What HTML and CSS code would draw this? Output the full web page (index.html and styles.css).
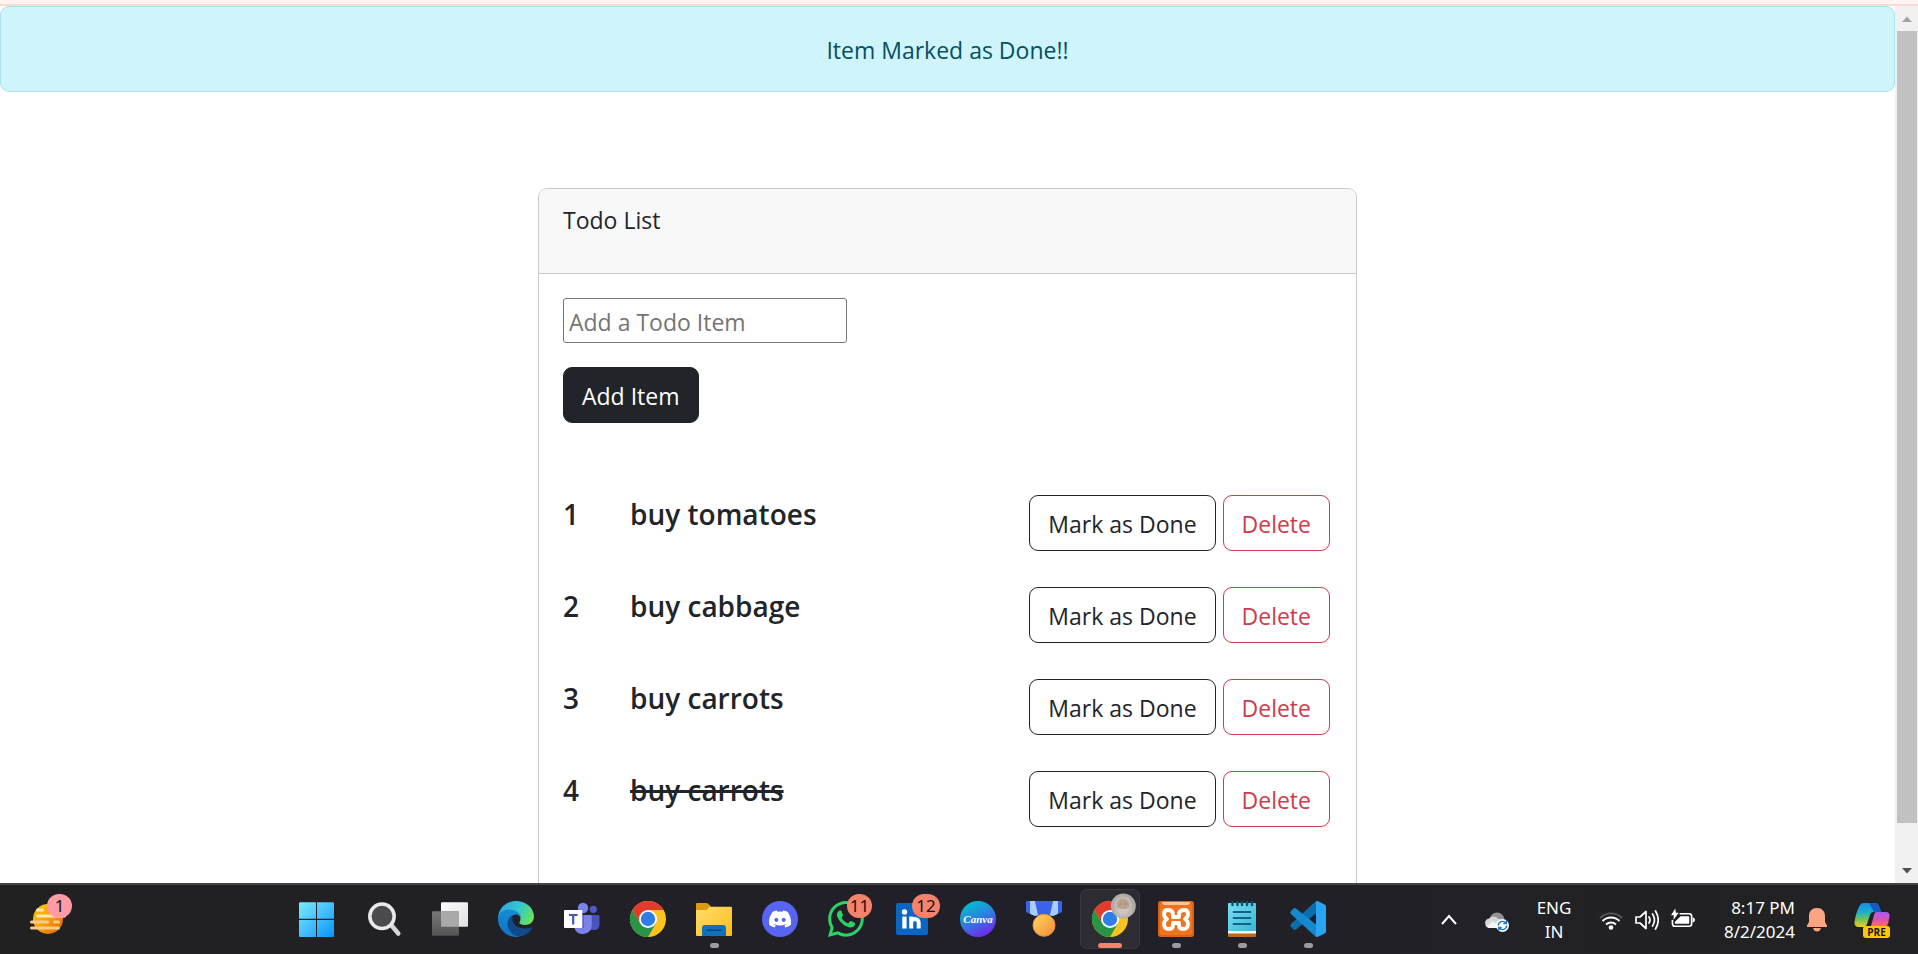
FILE: index.html
```html
<!DOCTYPE html>
<html lang="en">
<head>
<meta charset="utf-8">
<title>Todo List</title>
<link rel="stylesheet" href="styles.css">
</head>
<body>
<div class="window-edge"></div>
<div class="viewport">
  <main class="page">
    <div class="alert" role="alert">Item Marked as Done!!</div>
    <section class="card">
      <header class="card-header">Todo List</header>
      <div class="card-body">
        <form class="add-form">
          <input class="todo-input" type="text" placeholder="Add a Todo Item" aria-label="Add a Todo Item">
          <button class="btn btn-dark" type="button">Add Item</button>
        </form>
        <ol class="todos">
          <li class="todo"><h5 class="num">1</h5><h5 class="name">buy tomatoes</h5><button class="btn btn-outline-dark" type="button">Mark as Done</button><button class="btn btn-outline-danger" type="button">Delete</button></li>
          <li class="todo"><h5 class="num">2</h5><h5 class="name">buy cabbage</h5><button class="btn btn-outline-dark" type="button">Mark as Done</button><button class="btn btn-outline-danger" type="button">Delete</button></li>
          <li class="todo"><h5 class="num">3</h5><h5 class="name">buy carrots</h5><button class="btn btn-outline-dark" type="button">Mark as Done</button><button class="btn btn-outline-danger" type="button">Delete</button></li>
          <li class="todo"><h5 class="num">4</h5><h5 class="name"><del>buy carrots</del></h5><button class="btn btn-outline-dark" type="button">Mark as Done</button><button class="btn btn-outline-danger" type="button">Delete</button></li>
        </ol>
      </div>
    </section>
  </main>
  <div class="scrollbar">
    <svg class="scroll-arrow" viewBox="0 0 23 25"><path d="M7 16 12 10.500 17 16z" fill="#a3a3a3"/></svg>
    <div class="scroll-thumb"></div>
    <svg class="scroll-arrow" viewBox="0 0 23 25"><path d="M7 10 12 15.500 17 10z" fill="#505050"/></svg>
  </div>
</div>

<footer class="taskbar">
  <div class="widgets">
    <button class="slot" type="button" aria-label="Widgets">
      <svg viewBox="0 2 66 69">
        <defs><linearGradient id="sun" x1="0" y1="0" x2="1" y2="1"><stop offset="0" stop-color="#ffc90e"/><stop offset=".55" stop-color="#f59a0b"/><stop offset="1" stop-color="#dc5c00"/></linearGradient></defs>
        <circle cx="33" cy="36" r="15" fill="url(#sun)"/>
        <g stroke="#ffe9b0" stroke-width="3" stroke-linecap="round"><path d="M22.500 27h5M22.500 33h27"/><path d="M16.500 39h16M39.500 39h4M16.500 45h27" stroke="#f6cb8b"/></g>
      </svg>
      <span class="badge badge-pink">1</span>
    </button>
  </div>
  <nav class="apps">
    <button class="slot" type="button" aria-label="Start">
      <svg viewBox="0 2 66 69">
        <defs><linearGradient id="win" gradientUnits="userSpaceOnUse" x1="14" y1="19" x2="49" y2="54"><stop offset="0" stop-color="#78eaff"/><stop offset=".5" stop-color="#45bffc"/><stop offset="1" stop-color="#0796f8"/></linearGradient></defs>
        <path fill="url(#win)" d="M15 19.300h16v16.500H14V20.300q0-1 1-1zM32 19.300h16q1 0 1 1v15.500H32zM14 37h17v17H15q-1 0-1-1zM32 37h17v16q0 1-1 1H32z"/>
      </svg>
    </button>
    <button class="slot" type="button" aria-label="Search">
      <svg viewBox="0 2 66 69"><path d="m41 43 6.300 7.500" stroke="#d5d5d8" stroke-width="4.500" stroke-linecap="round"/><circle cx="31" cy="33.300" r="12.200" fill="#4b4b4e" stroke="#e9e9ec" stroke-width="3.500"/></svg>
    </button>
    <button class="slot" type="button" aria-label="Task view">
      <svg viewBox="0 2 66 69">
        <defs><linearGradient id="tv" x1="0" y1="0" x2="1" y2="1"><stop offset="0" stop-color="#fff"/><stop offset="1" stop-color="#dedede"/></linearGradient><linearGradient id="tg" x1="0" y1="0" x2="0" y2="1"><stop offset="0" stop-color="#777"/><stop offset="1" stop-color="#555"/></linearGradient></defs>
        <rect x="24" y="19.300" width="27" height="24.500" rx="1" fill="url(#tv)"/><rect x="15" y="28.300" width="27" height="24.500" rx="1" fill="url(#tg)"/><path d="M24 28.300h18v15.500H25q-1 0-1-1z" fill="#a9a9a9"/>
      </svg>
    </button>
    <button class="slot" type="button" aria-label="Edge">
      <svg viewBox="0 2 66 69">
        <defs>
          <linearGradient id="e1" x1="0" y1=".3" x2="1" y2=".7"><stop offset="0" stop-color="#2aa7e6"/><stop offset=".5" stop-color="#34c6cf"/><stop offset="1" stop-color="#6be552"/></linearGradient>
          <linearGradient id="e2" x1="0" y1="0" x2="0" y2="1"><stop offset="0" stop-color="#168bd2"/><stop offset="1" stop-color="#1173c4"/></linearGradient>
        </defs>
        <path d="M15 36C15 25 23 18 33 18c10 0 18 7 18 15.500 0 5-4 8.500-9 8.500-4 0-6-1.500-5.500-3 2-3 1-7-3-9C27 27 18 29 15 36z" fill="url(#e1)"/>
        <path d="M15 36c0-6 5-9.500 11-9.500 7 0 12 4 12 9-1-2.500-3-4-5-4-4 0-7 4-7 9 0 6 5 11 11 13a18 18 0 0 1-22-17.500z" fill="url(#e2)"/>
        <path d="M29.500 32.500C26 34 24 38 24.500 42c.7 6 6 11.500 12.500 11.500 5.500-1 10-4 12-8.500.3-.8-.5-1.200-1.200-.8-2 1-4 1.300-6 1.300-7 0-12-4-12.300-9 0-2 0-3 0-4z" fill="#114a8b"/>
      </svg>
    </button>
    <button class="slot" type="button" aria-label="Teams">
      <svg viewBox="0 2 66 69">
        <circle cx="44.300" cy="26.300" r="3.600" fill="#5059c9"/><path d="M41 32h8q1.500 0 1.500 1.500V42q0 5-5.500 5h-4z" fill="#4b53bc"/>
        <circle cx="34" cy="25" r="5.200" fill="#7b83eb"/><path d="M26 32h15.500q1.200 0 1.200 1.200V43a9 9 0 0 1-17 3z" fill="#7b83eb"/>
        <path d="M26 32h9v13h-9z" fill="#5a62c4"/>
        <rect x="15" y="27" width="18.300" height="18" rx="1" fill="#fff"/><path d="M20 32h8.500M24.200 32v9.500" stroke="#4b53bc" stroke-width="2.200" fill="none"/>
      </svg>
    </button>
    <button class="slot" type="button" aria-label="Chrome">
      <svg viewBox="0 2 66 69">
        <g id="chrome"><circle cx="33" cy="36" r="18" fill="#fcc31e"/><path d="M17.400 27A18 18 0 0 1 48.600 27H33l-7.800 13.500z" fill="#e33b2e"/><path d="M17.400 27A18 18 0 0 0 33 54l7.800-13.500H25.200z" fill="#279447"/><circle cx="33" cy="36" r="9" fill="#fff"/><circle cx="33" cy="36" r="7.200" fill="#2f7de9"/></g>
      </svg>
    </button>
    <button class="slot" type="button" aria-label="File Explorer">
      <svg viewBox="0 2 66 69">
        <defs><linearGradient id="fo" x1="0" y1="0" x2="1" y2="1"><stop offset="0" stop-color="#ffde6b"/><stop offset="1" stop-color="#fcbc1d"/></linearGradient></defs>
        <path d="M15 21q0-1 1-1h9.500q1 0 2 1l2.500 2.500V30H15z" fill="#dc9a0c"/><path d="M15 27h9q1.500 0 2.500-1l2-2.300h21.500q1 0 1 1V52q0 1-1 1H16q-1 0-1-1z" fill="url(#fo)"/>
        <path d="M21 53v-8q0-3 3-3h18q3 0 3 3v8z" fill="#1071ba"/><path d="M26.500 47.200h13" stroke="#08447a" stroke-width="1.600" stroke-linecap="round"/>
      </svg>
      <span class="running"></span>
    </button>
    <button class="slot" type="button" aria-label="Discord">
      <svg viewBox="0 2 66 69"><circle cx="33" cy="36" r="18" fill="#5865f2"/>
        <path transform="translate(22 25) scale(1.380)" fill="#fff" d="M13.545 2.907a13.200 13.200 0 0 0-3.257-1.011.05.05 0 0 0-.052.025c-.141.25-.297.577-.406.833a12.200 12.200 0 0 0-3.658 0 8 8 0 0 0-.412-.833.05.05 0 0 0-.052-.025c-1.125.194-2.220.534-3.257 1.011a.04.04 0 0 0-.021.018C.356 6.024-.213 9.047.066 12.032q.003.022.021.037a13.300 13.300 0 0 0 3.995 2.020.05.05 0 0 0 .056-.019q.463-.63.818-1.329a.05.05 0 0 0-.01-.059l-.018-.011a9 9 0 0 1-1.248-.595.05.05 0 0 1-.02-.066l.015-.019q.127-.095.248-.195a.05.05 0 0 1 .051-.007c2.619 1.196 5.454 1.196 8.041 0a.05.05 0 0 1 .053.007q.121.1.248.195a.05.05 0 0 1-.004.085 8 8 0 0 1-1.249.594.05.05 0 0 0-.03.03.05.05 0 0 0 .003.041c.24.465.515.909.817 1.329a.05.05 0 0 0 .056.019 13.200 13.200 0 0 0 4.001-2.020.05.05 0 0 0 .021-.037c.334-3.451-.559-6.449-2.366-9.106a.03.03 0 0 0-.02-.019m-8.198 7.307c-.789 0-1.438-.724-1.438-1.612s.637-1.613 1.438-1.613c.807 0 1.450.73 1.438 1.613 0 .888-.637 1.612-1.438 1.612m5.316 0c-.788 0-1.438-.724-1.438-1.612s.637-1.613 1.438-1.613c.807 0 1.451.73 1.438 1.613 0 .888-.631 1.612-1.438 1.612"/></svg>
    </button>
    <button class="slot" type="button" aria-label="WhatsApp">
      <svg viewBox="0 2 66 69"><path transform="translate(15 18) scale(2.250)" fill="#2bd366" d="M13.601 2.326A7.850 7.850 0 0 0 7.994 0C3.627 0 .068 3.558.064 7.926c0 1.399.366 2.760 1.057 3.965L0 16l4.204-1.102a7.900 7.900 0 0 0 3.790.965h.004c4.368 0 7.926-3.558 7.930-7.930A7.900 7.900 0 0 0 13.600 2.326zM7.994 14.521a6.600 6.600 0 0 1-3.356-.92l-.24-.144-2.494.654.666-2.433-.156-.251a6.560 6.560 0 0 1-1.007-3.505c0-3.626 2.957-6.584 6.591-6.584a6.560 6.560 0 0 1 4.660 1.931 6.560 6.560 0 0 1 1.928 4.660c-.004 3.639-2.961 6.592-6.592 6.592m3.615-4.934c-.197-.099-1.170-.578-1.353-.646-.182-.065-.315-.099-.445.099-.133.197-.513.646-.627.775-.114.133-.232.148-.43.05-.197-.1-.836-.308-1.592-.985-.59-.525-.985-1.175-1.103-1.372-.114-.198-.011-.304.088-.403.087-.088.197-.232.296-.346.1-.114.133-.198.198-.33.065-.134.034-.248-.015-.347-.05-.099-.445-1.076-.612-1.470-.16-.389-.323-.335-.445-.34-.114-.007-.247-.007-.38-.007a.73.73 0 0 0-.529.247c-.182.198-.691.677-.691 1.654s.71 1.916.81 2.049c.098.133 1.394 2.132 3.383 2.992.47.205.84.326 1.129.418.475.152.904.129 1.246.08.38-.058 1.171-.48 1.338-.943.164-.464.164-.86.114-.943-.049-.084-.182-.133-.38-.232"/></svg>
      <span class="badge">11</span>
    </button>
    <button class="slot" type="button" aria-label="LinkedIn">
      <svg viewBox="0 2 66 69"><rect x="17" y="20" width="32" height="32" rx="2" fill="#0a66c2"/><circle cx="25.500" cy="29" r="2.700" fill="#fff"/><path d="M23.300 33.500h4.300v12h-4.300z" fill="#fff"/><path d="M32.200 45.500v-12M32.200 40c0-5.500 7.500-5.500 7.500 0v5.500" fill="none" stroke="#fff" stroke-width="4"/></svg>
      <span class="badge badge-wide">12</span>
    </button>
    <button class="slot" type="button" aria-label="Canva">
      <svg viewBox="0 2 66 69">
        <defs><linearGradient id="cv" x1=".2" y1="0" x2=".7" y2="1"><stop offset="0" stop-color="#00c4cc"/><stop offset=".5" stop-color="#2c7fe0"/><stop offset="1" stop-color="#7a20f0"/></linearGradient></defs>
        <circle cx="33" cy="36" r="18" fill="url(#cv)"/><text class="canva-word" x="33" y="40" text-anchor="middle">Canva</text>
      </svg>
    </button>
    <button class="slot" type="button" aria-label="Rewards">
      <svg viewBox="0 2 66 69">
        <defs><linearGradient id="md" x1="0" y1="0" x2="1" y2="1"><stop offset="0" stop-color="#ffd75e"/><stop offset="1" stop-color="#f58a3c"/></linearGradient></defs>
        <path d="M16 18h34q1 0 1 1v9q0 1-1 1.500L42 33H24l-8-3.500q-1-.5-1-1.500v-9q0-1 1-1z" fill="#3a62ea"/>
        <path d="M19 18h5l3 14-3 1-5-2.300zM47 18h-5l-3 14 3 1 5-2.300z" fill="#a6cdfd"/>
        <circle cx="33" cy="42.300" r="11" fill="url(#md)" stroke="#ee9035"/>
      </svg>
    </button>
    <button class="slot active" type="button" aria-label="Chrome window">
      <svg viewBox="0 2 66 69">
        <rect x="3.500" y="6.500" width="59" height="59" rx="6" fill="#2d2c33" stroke="#39383f"/>
        <use href="#chrome"/>
        <circle cx="46.300" cy="23" r="12.500" fill="#aeaaa6"/><path d="M37 22q1-8.500 9-8.500t9.500 8.500l-1 8q-3 4.500-8.500 4.500t-8-4.500z" fill="#c0bab4"/><ellipse cx="46" cy="22" rx="6" ry="6.500" fill="#bd9f8d"/><path d="M40.500 25q2.500 1 5.500 1t5.500-1q0 7-5.500 7t-5.500-7z" fill="#cdc6c0"/><path d="M42 21h3M47 21h3" stroke="#a0887a"/>
      </svg>
      <span class="running running-active"></span>
    </button>
    <button class="slot" type="button" aria-label="XAMPP">
      <svg viewBox="0 2 66 69">
        <rect x="15" y="18" width="36" height="36" rx="3" fill="#ee7422"/><rect x="16" y="19" width="34" height="34" rx="3" fill="none" stroke="#d75e13" stroke-width="1.500"/><path d="M19 19h28q0 3-3 3H22q-3 0-3-3z" fill="#fbc49a"/>
        <path d="M25 27q-4 0-4 4 0 3 3 5-3 2-3 5 0 5 5 5 4 0 4-4v-2h6v2q0 4 4 4 5 0 5-5 0-3-3-5 3-2 3-5 0-4-4-4-5 0-5 5v2h-6v-2q0-5-5-5z" fill="none" stroke="#fff" stroke-width="3.800" stroke-linejoin="round"/>
      </svg>
      <span class="running"></span>
    </button>
    <button class="slot" type="button" aria-label="Notepad">
      <svg viewBox="0 2 66 69">
        <defs><linearGradient id="np" x1="0" y1="0" x2="1" y2="1"><stop offset="0" stop-color="#7adff0"/><stop offset="1" stop-color="#3bb5d6"/></linearGradient></defs>
        <path d="M19 47h28v6q0 1-1 1H20q-1 0-1-1z" fill="#bd6a17"/><path d="M19 46h28v4.500H19z" fill="#f5f5f5"/><rect x="19" y="20" width="28" height="28" rx="1" fill="url(#np)"/>
        <path d="M23.500 19v3M28.500 19v3M33 19v3M38 19v3M43 19v3" stroke="#0b5470" stroke-width="2.400" stroke-linecap="round"/><path d="M24.500 29h17M24.500 35h17M24.500 41h17" stroke="#0e6387" stroke-width="1.800" stroke-linecap="round"/>
      </svg>
      <span class="running"></span>
    </button>
    <button class="slot" type="button" aria-label="Visual Studio Code">
      <svg viewBox="0 2 66 69">
        <path d="M41 18 16 41q-1.500 1.500 0 3l2.500 2.500q1.200.8 2.500 0L41.500 30z" fill="#0b6dab"/><path d="M41 54 16 31q-1.500-1.500 0-3l2.500-2.500q1.200-.8 2.500 0L41.500 42z" fill="#1688ce"/><path d="M41 18.300 42.500 18 50 21.800q1 .5 1 1.700v25q0 1.200-1 1.700L42.500 54q-.8.200-1.500-.5z" fill="#2aa5f3"/>
      </svg>
      <span class="running"></span>
    </button>
  </nav>
  <div class="tray">
    <svg class="chevron" viewBox="0 0 16 24"><path d="m1 16 7-8 7 8" fill="none" stroke="#fff" stroke-width="2"/></svg>
    <svg class="tray-icon cloud" viewBox="0 0 24 24">
      <circle cx="12" cy="12" r="7.500" fill="#919191"/><path d="M5 20a4.800 4.800 0 0 1-1-9.500 6 6 0 0 1 9 0L20 14v6z" fill="#d6d6d6"/><path d="M2 18.500 8 13l8 7H5q-2 0-3-1.500z" fill="#f5f5f5"/>
      <circle cx="17.500" cy="17.500" r="6.500" fill="#fff"/><path d="M13.300 17.500a4.200 4.200 0 0 1 7.500-2.500M21.700 17.500a4.200 4.200 0 0 1-7.500 2.500M21.300 12.500V15.500h-3M13.700 22.500v-3h3" fill="none" stroke="#1879cf" stroke-width="1.400"/>
    </svg>
    <div class="lang">ENG<br>IN</div>
    <svg class="tray-icon wifi" viewBox="0 0 24 24"><g fill="none" stroke="#fff" stroke-width="1.900"><path d="M1 10a15.500 15.500 0 0 1 22 0" stroke="#55555a"/><path d="M3.500 13a12 12 0 0 1 17 0M7 16.500a7.200 7.200 0 0 1 10 0"/></g><circle cx="12" cy="19.500" r="2.300" fill="#fff"/></svg>
    <svg class="tray-icon speaker" viewBox="0 0 24 24"><g fill="none" stroke="#fff" stroke-width="1.700" stroke-linejoin="round" stroke-linecap="round"><path d="M1 9v6h4l6 5.500v-17L5 9z"/><path d="M14 9q2 3 0 6M17.500 6q4 6 0 12M20.500 3q5.500 9 0 18"/></g></svg>
    <svg class="tray-icon battery" viewBox="0 0 25 24"><path d="M9 5.500h10q2.500 0 2.500 2.500v8q0 2.500-2.500 2.500H4q-2.500 0-2.500-2.500v-4" fill="none" stroke="#fff" stroke-width="1.700"/><path d="M10 8h8q1 0 1 1v6q0 1-1 1H5q-1 0-1-1v-1z" fill="#fff"/><path d="M22.500 9.500q2.500 0 2.500 2.500t-2.500 2.500z" fill="#fff"/><path d="M4.500 0 0 7h3L2.500 12 8 4.500H5z" fill="#fff"/></svg>
    <div class="clock">8:17 PM<br>8/2/2024</div>
    <svg class="bell" viewBox="0 0 20 24"><path d="M10 0c5 0 8 3.500 8 8v6l2 3.500V19H0v-1.500L2 14V8c0-4.500 3-8 8-8zM6 20h8q-1 3.500-4 3.500T6 20z" fill="#fba482"/></svg>
    <svg class="copilot" viewBox="0 0 36 36">
      <defs><linearGradient id="c1" x1="0" y1="0" x2="0" y2="1"><stop offset="0" stop-color="#168cf0"/><stop offset=".4" stop-color="#20b0c8"/><stop offset=".7" stop-color="#7ac54a"/><stop offset="1" stop-color="#f2ce22"/></linearGradient><linearGradient id="c2" x1="0" y1="0" x2="0" y2="1"><stop offset="0" stop-color="#a15cf2"/><stop offset=".5" stop-color="#e250ac"/><stop offset="1" stop-color="#ff7a50"/></linearGradient></defs>
      <path d="M10 1h11q3 0 4 3l2 6h-8q-2 0-3 3l-3 9q-1 3-3 3H5q-5 0-4.500-5Q2 10 6 3q1-2 4-2z" fill="url(#c1)"/><path d="M15 1h6q3 0 4 3l2 6h-7z" fill="#125cc8"/>
      <path d="M22 10h10q4 0 3.500 4.500Q35 21 32 26H15l2-2 3-11q.5-3 2-3z" fill="url(#c2)"/>
      <rect x="9" y="24" width="27" height="12" rx="3" fill="#fdc70c"/><text class="pre" x="22.500" y="34" text-anchor="middle">PRE</text>
    </svg>
  </div>
</footer>
</body>
</html>
```

FILE: styles.css
```css
* { box-sizing: border-box; }
body {
  margin: 0;
  height: 100vh;
  display: flex;
  flex-direction: column;
  overflow: hidden;
  background: #fff;
  color: #212529;
  font-family: "Open Sans", "Noto Sans", sans-serif;
  font-size: 23px;
  line-height: 36px;
}
button, input { font: inherit; }

.window-edge {
  flex: none;
  height: 6px;
  background: #fff4f2;
  border-bottom: 2px solid #f7dbd9;
}
.viewport {
  flex: 1;
  min-height: 0;
  display: flex;
}
.page {
  flex: 1;
  overflow: hidden;
}
.alert {
  padding: 25px 24px 23px;
  border: 1px solid #a9e3ee;
  border-radius: 9px;
  background: #cff4fc;
  color: #055160;
  text-align: center;
}
.card {
  max-width: 819px;
  margin: 96px auto 0;
  border: 1px solid #c9cacb;
  border-radius: 9px;
}
.card-header {
  padding: 13px 24px 35px;
  border-bottom: 1px solid #c9cacb;
  border-radius: 8px 8px 0 0;
  background: #f8f8f8;
}
.card-body { padding: 24px 24px 72px; }
.add-form {
  display: flex;
  flex-direction: column;
  align-items: flex-start;
  gap: 24px;
}
.todo-input {
  width: 284px;
  height: 45px;
  padding: 2px 5px 0;
  border: 1px solid #767676;
  border-radius: 3px;
  background: #fff;
}
.todo-input::placeholder { color: #757575; opacity: 1; }
.btn {
  padding: 10px 18px 8px;
  border: 1px solid;
  border-radius: 9px;
  background: #fff;
  white-space: nowrap;
}
.btn-dark { background: #212529; color: #fff; border-color: #212529; }
.btn-outline-dark { color: #212529; }
.btn-outline-danger { color: #cf3c4a; border-color: #cf3c4a; }
.todos {
  list-style: none;
  margin: 72px 2px 0 0;
  padding: 0;
  display: grid;
  gap: 36px;
}
.todo {
  display: grid;
  grid-template-columns: 67px 1fr auto auto;
  align-items: start;
}
.todo .btn-outline-dark { margin-right: 7px; }
.num, .name {
  margin: 0;
  font-size: 28px;
  font-weight: 600;
  line-height: 38px;
}
.name del { text-decoration-thickness: 3px; }

.scrollbar {
  flex: none;
  width: 23px;
  display: flex;
  flex-direction: column;
  background: #f1f1f1;
}
.scroll-arrow { width: 23px; height: 25px; }
.scroll-thumb {
  flex: 1;
  margin: 0 1px 35px 2px;
  background: #c1c1c1;
}

.taskbar {
  flex: none;
  display: flex;
  align-items: center;
  border-top: 2px solid #444446;
  background: linear-gradient(90deg, #212122, #212028 45%, #212028 60%, #222224);
  color: #fff;
  font-family: "Noto Sans", "Open Sans", sans-serif;
  font-size: 17px;
  line-height: 24px;
}
.widgets { display: flex; width: 285px; padding-left: 15px; }
.apps { display: flex; }
.slot {
  position: relative;
  width: 66px;
  height: 69px;
  padding: 0;
  border: 0;
  background: none;
  color: #1c1010;
}
.slot svg { display: block; width: 66px; height: 69px; }
.badge {
  position: absolute;
  top: 9px;
  left: 34px;
  width: 25px;
  height: 24px;
  border-radius: 12px;
  background: #f5836b;
  line-height: 24px;
  text-align: center;
}
.badge-wide { left: 33px; width: 28px; }
.badge-pink { left: 32px; background: #ff9ba5; }
.running {
  position: absolute;
  left: 29px;
  bottom: 6px;
  width: 9px;
  height: 5px;
  border-radius: 3px;
  background: #9b9aa0;
}
.running-active { left: 21px; width: 24px; background: #f5836b; }
.canva-word {
  font: italic bold 11px "Liberation Serif", serif;
  fill: #fff;
}
.tray {
  margin-left: auto;
  padding-right: 28px;
  display: flex;
  align-items: center;
}
.tray svg { flex: none; }
.chevron { width: 16px; height: 24px; }
.tray-icon { width: 24px; height: 24px; }
.cloud { margin-left: 28px; }
.lang { width: 36px; margin: 0 27px; text-align: center; }
.speaker, .battery { margin-left: 12px; }
.clock { width: 76px; margin: 0 12px 0 24px; text-align: right; white-space: nowrap; }
.bell { width: 20px; height: 24px; }
.copilot { width: 36px; height: 36px; margin-left: 27px; }
.pre { font: bold 10px "Open Sans", sans-serif; fill: #1b1600; }
```
